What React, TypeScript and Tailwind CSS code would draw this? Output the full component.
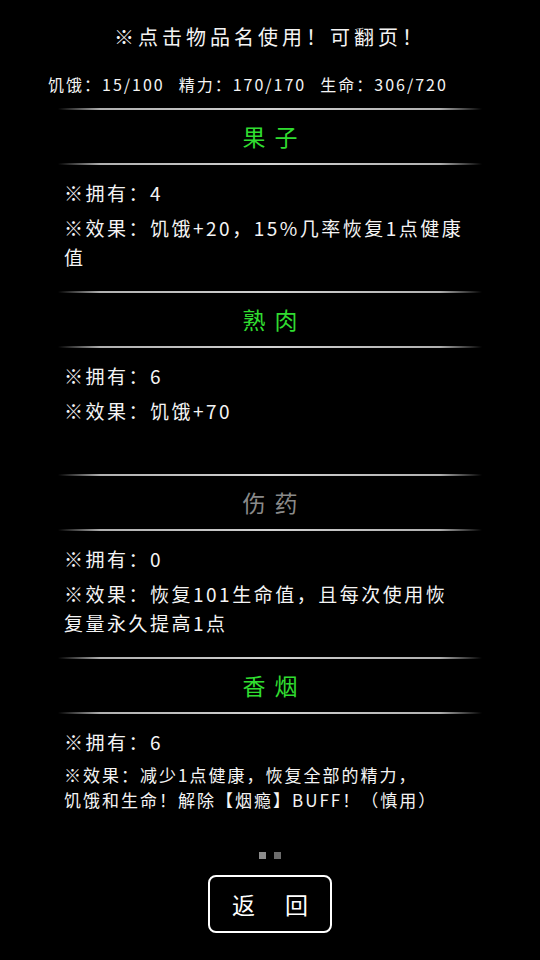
import React from 'react';

type Item = {
  name: string;
  count: number;
  usable: boolean;
  effect: string[];
  small?: boolean;
};

const items: Item[] = [
  { name: '果子', count: 4, usable: true, effect: ['※效果：饥饿+20，15%几率恢复1点健康', '值'] },
  { name: '熟肉', count: 6, usable: true, effect: ['※效果：饥饿+70'] },
  { name: '伤药', count: 0, usable: false, effect: ['※效果：恢复101生命值，且每次使用恢', '复量永久提高1点'] },
  {
    name: '香烟',
    count: 6,
    usable: true,
    effect: ['※效果：减少1点健康，恢复全部的精力，', '饥饿和生命！解除【烟瘾】BUFF！（慎用）'],
    small: true,
  },
];

const font = { fontFamily: '"Noto Sans CJK SC", "Noto Sans", sans-serif' };

function Divider() {
  return (
    <div className="mx-[58px] h-[2px] bg-[linear-gradient(to_right,transparent,#b0b0b0_10%,#d2d2d2_50%,#b0b0b0_90%,transparent)]" />
  );
}

function ItemBlock({ item }: { item: Item }) {
  return (
    <div className="flex flex-col">
      <Divider />
      <div className="flex h-[53px] items-center justify-center">
        <button
          className={
            item.usable
              ? 'pl-[9px] text-[23px] leading-none tracking-[9px] text-[#30dc30]'
              : 'pl-[9px] text-[23px] leading-none tracking-[9px] text-[#8a8a8a]'
          }
        >
          {item.name}
        </button>
      </div>
      <Divider />
      <div className="flex h-[126px] flex-col pl-[64px] pt-[13px] text-[#f4f4f4]">
        <div className="whitespace-nowrap text-[19px] leading-[29px] tracking-[2.5px]">※拥有：{item.count}</div>
        <div
          className={
            item.small
              ? 'mt-[6px] text-[17px] leading-[25px] tracking-[2px]'
              : 'mt-[6px] text-[19px] leading-[29px] tracking-[2.5px]'
          }
        >
          {item.effect.map((line) => (
            <div key={line} className="whitespace-nowrap">
              {line}
            </div>
          ))}
        </div>
      </div>
    </div>
  );
}

export default function App() {
  return (
    <div className="flex h-[960px] w-full flex-col overflow-hidden bg-black text-white" style={font}>
      <div className="whitespace-nowrap pt-[22px] text-center text-[20px] leading-[30px] tracking-[4px] text-[#f4f4f4]">
        ※点击物品名使用！可翻页！
      </div>
      <div className="mt-[20px] flex gap-[14px] whitespace-nowrap pl-[48px] text-[16px] leading-[24px] tracking-[2px] text-[#f4f4f4]">
        <span>饥饿：15/100</span>
        <span>精力：170/170</span>
        <span>生命：306/720</span>
      </div>
      <div className="mt-[12px] flex flex-col">
        {items.map((item) => (
          <ItemBlock key={item.name} item={item} />
        ))}
      </div>
      {/* page indicator */}
      <div className="mt-[12px] flex justify-center gap-[8px]">
        <div className="h-[7px] w-[7px] bg-[#8c8c8c]" />
        <div className="h-[7px] w-[7px] bg-[#6c6c6c]" />
      </div>
      <div className="mt-[16px] flex justify-center">
        <button className="flex h-[58px] w-[124px] items-center justify-center gap-[30px] rounded-[8px] border-[2.5px] border-white text-[23px] leading-none text-white">
          <span>返</span>
          <span>回</span>
        </button>
      </div>
    </div>
  );
}
